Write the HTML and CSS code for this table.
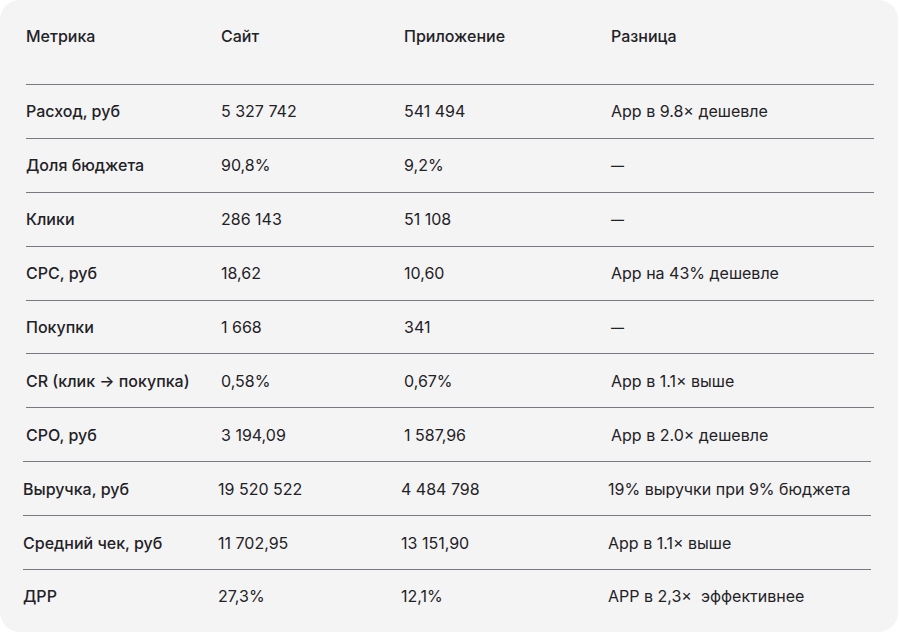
FILE: index.html
```html
<!DOCTYPE html>
<html lang="ru">
<head>
<meta charset="utf-8">
<title>Сайт vs Приложение</title>
<link rel="stylesheet" href="styles.css">
</head>
<body>
<div class="card">
  <div class="row head">
    <div class="cell label">Метрика</div>
    <div class="cell">Сайт</div>
    <div class="cell">Приложение</div>
    <div class="cell">Разница</div>
  </div>
  <div class="row">
    <div class="cell label">Расход, руб</div>
    <div class="cell">5 327 742</div>
    <div class="cell">541 494</div>
    <div class="cell">App в 9.8× дешевле</div>
  </div>
  <div class="row">
    <div class="cell label">Доля бюджета</div>
    <div class="cell">90,8%</div>
    <div class="cell">9,2%</div>
    <div class="cell"><span class="dash">—</span></div>
  </div>
  <div class="row">
    <div class="cell label">Клики</div>
    <div class="cell">286 143</div>
    <div class="cell">51 108</div>
    <div class="cell"><span class="dash">—</span></div>
  </div>
  <div class="row">
    <div class="cell label">CPC, руб</div>
    <div class="cell">18,62</div>
    <div class="cell">10,60</div>
    <div class="cell">App на 43% дешевле</div>
  </div>
  <div class="row">
    <div class="cell label">Покупки</div>
    <div class="cell">1 668</div>
    <div class="cell">341</div>
    <div class="cell"><span class="dash">—</span></div>
  </div>
  <div class="row">
    <div class="cell label">CR (клик → покупка)</div>
    <div class="cell">0,58%</div>
    <div class="cell">0,67%</div>
    <div class="cell">App в 1.1× выше</div>
  </div>
  <div class="row">
    <div class="cell label">CPO, руб</div>
    <div class="cell">3 194,09</div>
    <div class="cell">1 587,96</div>
    <div class="cell">App в 2.0× дешевле</div>
  </div>
  <div class="row shift">
    <div class="cell label">Выручка, руб</div>
    <div class="cell">19 520 522</div>
    <div class="cell">4 484 798</div>
    <div class="cell">19% выручки при 9% бюджета</div>
  </div>
  <div class="row shift">
    <div class="cell label">Средний чек, руб</div>
    <div class="cell">11 702,95</div>
    <div class="cell">13 151,90</div>
    <div class="cell">App в 1.1× выше</div>
  </div>
  <div class="row shift">
    <div class="cell label">ДРР</div>
    <div class="cell">27,3%</div>
    <div class="cell">12,1%</div>
    <div class="cell">APP в 2,3×&nbsp; эффективнее</div>
  </div>
</div>
</body>
</html>
```
FILE: styles.css
```css
html, body {
  margin: 0;
  padding: 0;
  background: #ffffff;
}
body {
  font-family: Inter, "Noto Sans", sans-serif;
  color: #1f2226;
  font-size: 16px;
}
.card {
  width: 898px;
  height: 632px;
  box-sizing: border-box;
  background: #f4f4f4;
  border-radius: 20px;
  padding: 0 24px 0 26px;
  display: flex;
  flex-direction: column;
}
.row {
  display: grid;
  grid-template-columns: 195px 183px 207px 1fr;
  align-items: center;
  height: 53.9px;
  flex: none;
  border-top: 1px solid #737a80;
  box-sizing: border-box;
  width: 848px;
}
.row.head {
  border-top: none;
  height: 84px;
  align-items: start;
  padding-top: 24px;
}
.row.shift {
  margin-left: -3px;
}
.cell {
  line-height: 24px;
  white-space: nowrap;
}
.head .cell,
.cell.label {
  font-weight: 500;
}
.dash {
  font-size: 13px;
  font-weight: 600;
  vertical-align: 1px;
}
```
